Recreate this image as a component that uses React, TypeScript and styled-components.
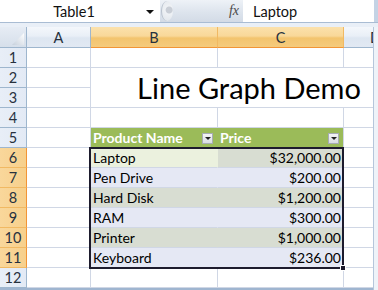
import React from "react";
import styled, { createGlobalStyle, css } from "styled-components";

const GlobalStyle = createGlobalStyle`
  html, body { margin: 0; padding: 0; background: #ffffff; overflow: hidden; }
  * { box-sizing: border-box; }
`;

const FONT = `Lato, "Open Sans", "Liberation Sans", sans-serif`;

type Pos = { $r: number; $c: number };
const place = css<Pos>`
  grid-row: ${(p) => p.$r};
  grid-column: ${(p) => p.$c};
`;

const Window = styled.div`
  width: 378px;
  height: 290px;
  display: flex;
  flex-direction: column;
  overflow: hidden;
  font-family: ${FONT};
  background: #ffffff;
`;

const TopBar = styled.div`
  height: 23px;
  display: flex;
  border-bottom: 1px solid #a9bcd3;
  flex: none;
`;

const NameBox = styled.div`
  width: 160px;
  background: #ffffff;
  display: flex;
  align-items: center;
  font-size: 14.5px;
  color: #111;
`;

const NameText = styled.span`
  flex: 1;
  text-align: center;
  padding-left: 2px;
`;

const DropArrow = styled.span`
  width: 0;
  height: 0;
  border-left: 4px solid transparent;
  border-right: 4px solid transparent;
  border-top: 4px solid #111;
  margin-right: 6px;
  margin-top: 2px;
`;

const Splitter = styled.div`
  width: 83px;
  display: flex;
  align-items: center;
  background: linear-gradient(#eef2f7, #dde4ed 55%, #d3dbe6);
`;

const Knob = styled.div`
  width: 12px;
  height: 20px;
  margin-left: 1px;
  border-radius: 50%;
  background: radial-gradient(circle at 65% 45%, #c9ced6 0 3px, #eef1f5 4px, #dfe4ea 100%);
  border-left: 1px solid #b7c0cc;
`;

const Fx = styled.span`
  margin-left: auto;
  margin-right: 4px;
  font-family: "Liberation Serif", "DejaVu Serif", serif;
  font-style: italic;
  font-size: 14px;
  color: #4a4a4a;
`;

const FormulaBox = styled.div`
  flex: 1;
  background: #ffffff;
  display: flex;
  align-items: center;
  padding-left: 10px;
  font-size: 14.5px;
  color: #111;
  border-right: 4px solid #c4d3e5;
`;

const Strip = styled.div`
  height: 4px;
  flex: none;
  background: #e9eff7;
`;

const Body = styled.div`
  flex: 1;
  display: flex;
  min-height: 0;
`;

const Viewport = styled.div`
  flex: 1;
  overflow: hidden;
  border-bottom: 2px solid #9fb5d0;
`;

const RightFrame = styled.div`
  width: 5px;
  border-left: 1px solid #b5c6db;
  background: #eef3f9;
`;

const Sheet = styled.div`
  display: grid;
  grid-template-columns: 27px 64px 127px 126px 64px;
  grid-template-rows: 21px repeat(12, 20px);
  width: 408px;
`;

const Corner = styled.div`
  grid-row: 1;
  grid-column: 1;
  border-right: 1px solid #9eb6ce;
  border-bottom: 1px solid #9eb6ce;
  background: linear-gradient(#e6ecf4, #d6dfea);
  display: flex;
  align-items: flex-end;
  justify-content: flex-end;
`;

const ColHeader = styled.div<Pos & { $sel?: boolean }>`
  ${place};
  border-right: 1px solid ${(p) => (p.$sel ? "#f1b963" : "#9eb6ce")};
  border-bottom: 1px solid ${(p) => (p.$sel ? "#f29536" : "#9eb6ce")};
  background: ${(p) =>
    p.$sel
      ? "linear-gradient(#fbe1ac, #f9d899 45%, #f3c46e 55%, #f5cb7d)"
      : "linear-gradient(#f4f7fb, #e9eff7 45%, #dde6f1 55%, #e2e9f3)"};
  display: flex;
  align-items: center;
  justify-content: center;
  font-size: 14.5px;
  color: #27313e;
  padding-top: 1px;
`;

const RowHeader = styled.div<Pos & { $sel?: boolean }>`
  ${place};
  border-right: 1px solid ${(p) => (p.$sel ? "#f29536" : "#9eb6ce")};
  border-bottom: 1px solid ${(p) => (p.$sel ? "#f1b963" : "#9eb6ce")};
  background: ${(p) =>
    p.$sel
      ? "linear-gradient(90deg, #f9d79b, #f7d08c)"
      : "linear-gradient(90deg, #e8eef7, #e3eaf5)"};
  display: flex;
  align-items: center;
  justify-content: center;
  font-size: 14.5px;
  color: #27313e;
`;

const Cell = styled.div<Pos & { $bg?: string; $align?: "left" | "right"; $noRight?: boolean }>`
  ${place};
  border-right: 1px solid ${(p) => (p.$noRight ? "transparent" : "#d0d7e5")};
  border-bottom: 1px solid #d0d7e5;
  background: ${(p) => p.$bg || "#ffffff"};
  display: flex;
  align-items: flex-end;
  justify-content: ${(p) => (p.$align === "right" ? "flex-end" : "flex-start")};
  padding: 0 2px 1px 2px;
  font-size: 14px;
  color: #000;
  white-space: nowrap;
  overflow: hidden;
`;

const Merged = styled.div`
  grid-column: 3 / 6;
  grid-row: 3 / 5;
  border-right: 1px solid #d0d7e5;
  border-bottom: 1px solid #d0d7e5;
  display: flex;
  align-items: flex-end;
  justify-content: center;
  font-size: 29px;
  color: #000;
  padding-bottom: 1px;
  line-height: 1.2;
`;

const TableHead = styled.div<Pos & { $last?: boolean }>`
  ${place};
  background: #9bbb59;
  border-bottom: 1px solid #d0d7e5;
  border-right: 1px solid ${(p) => (p.$last ? "#d0d7e5" : "#9bbb59")};
  display: flex;
  align-items: flex-end;
  padding: 0 4px 1px 2px;
  font-size: 14px;
  font-weight: 700;
  color: #ffffff;
`;

const HeadLabel = styled.span`
  flex: 1;
`;

const FilterButton = styled.span`
  width: 11px;
  height: 11px;
  margin-bottom: 2px;
  border: 1px solid #a7acb5;
  background: linear-gradient(#f3f4f6, #d9dde3);
  display: flex;
  align-items: center;
  justify-content: center;
  &::after {
    content: "";
    width: 0;
    height: 0;
    border-left: 3px solid transparent;
    border-right: 3px solid transparent;
    border-top: 3px solid #222;
  }
`;

const Selection = styled.div`
  grid-column: 3 / 5;
  grid-row: 7 / 13;
  margin: -1px 0 -1px -2px;
  border: 2px solid #1d1b2d;
  z-index: 2;
  pointer-events: none;
  position: relative;
`;

const FillHandle = styled.span`
  position: absolute;
  right: -4px;
  bottom: -4px;
  width: 6px;
  height: 6px;
  background: #1d1b2d;
  border: 1px solid #ffffff;
`;

const rows: [string, string][] = [
  ["Laptop", "$32,000.00"],
  ["Pen Drive", "$200.00"],
  ["Hard Disk", "$1,200.00"],
  ["RAM", "$300.00"],
  ["Printer", "$1,000.00"],
  ["Keyboard", "$236.00"],
];

const BAND_SEL = "#d8ddd2";
const WHITE_SEL = "#e5e8f4";
const ACTIVE = "#ebf1de";

function CornerMark() {
  return (
    <svg width="16" height="16" viewBox="0 0 16 16">
      <defs>
        <linearGradient id="cm" x1="0" y1="1" x2="1" y2="0">
          <stop offset="0" stopColor="#c6d0dc" />
          <stop offset="1" stopColor="#ffffff" />
        </linearGradient>
      </defs>
      <polygon points="14,2 14,14 2,14" fill="url(#cm)" />
    </svg>
  );
}

export default function App() {
  const items: React.ReactNode[] = [];
  for (let r = 1; r <= 12; r++) {
    const g = r + 1;
    const sel = r >= 6 && r <= 11;
    items.push(
      <RowHeader key={`h${r}`} $r={g} $c={1} $sel={sel}>
        {r}
      </RowHeader>
    );
    items.push(<Cell key={`a${r}`} $r={g} $c={2} />);
    if (r === 2 || r === 3) continue;
    if (r === 5) {
      items.push(
        <TableHead key="th1" $r={g} $c={3}>
          <HeadLabel>Product Name</HeadLabel>
          <FilterButton />
        </TableHead>
      );
      items.push(
        <TableHead key="th2" $r={g} $c={4} $last>
          <HeadLabel>Price</HeadLabel>
          <FilterButton />
        </TableHead>
      );
      items.push(<Cell key={`d${r}`} $r={g} $c={5} />);
      continue;
    }
    if (sel) {
      const [name, price] = rows[r - 6];
      const band = r % 2 === 0;
      items.push(
        <Cell key={`b${r}`} $r={g} $c={3} $noRight $bg={r === 6 ? ACTIVE : band ? BAND_SEL : WHITE_SEL}>
          {name}
        </Cell>
      );
      items.push(
        <Cell key={`c${r}`} $r={g} $c={4} $align="right" $bg={band ? BAND_SEL : WHITE_SEL}>
          {price}
        </Cell>
      );
      items.push(<Cell key={`d${r}`} $r={g} $c={5} />);
      continue;
    }
    items.push(<Cell key={`b${r}`} $r={g} $c={3} />);
    items.push(<Cell key={`c${r}`} $r={g} $c={4} />);
    items.push(<Cell key={`d${r}`} $r={g} $c={5} />);
  }

  return (
    <>
      <GlobalStyle />
      <Window>
        <TopBar>
          <NameBox>
            <NameText>Table1</NameText>
            <DropArrow />
          </NameBox>
          <Splitter>
            <Knob />
            <Fx>fx</Fx>
          </Splitter>
          <FormulaBox>Laptop</FormulaBox>
        </TopBar>
        <Strip />
        <Body>
          <Viewport>
            <Sheet>
              <Corner>
                <CornerMark />
              </Corner>
              <ColHeader $r={1} $c={2}>A</ColHeader>
              <ColHeader $r={1} $c={3} $sel>B</ColHeader>
              <ColHeader $r={1} $c={4} $sel>C</ColHeader>
              <ColHeader $r={1} $c={5}>D</ColHeader>
              {items}
              <Merged>Line Graph Demo</Merged>
              <Selection>
                <FillHandle />
              </Selection>
            </Sheet>
          </Viewport>
          <RightFrame />
        </Body>
      </Window>
    </>
  );
}
